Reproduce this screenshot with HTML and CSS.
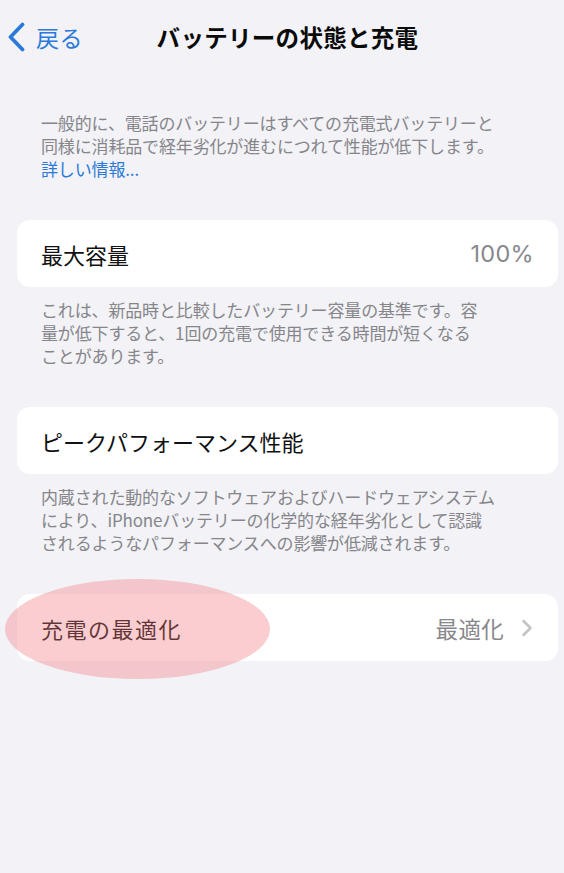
FILE: index.html
```html
<!DOCTYPE html>
<html lang="ja">
<head>
<meta charset="utf-8">
<title>バッテリーの状態と充電</title>
<link rel="stylesheet" href="styles.css">
</head>
<body>
<div class="screen">
  <header class="nav">
    <a class="back" href="#">
      <svg class="back-chev" width="18" height="30" viewBox="0 0 18 30" aria-hidden="true">
        <path d="M15.5 2.5 L3.5 15 L15.5 27.5" fill="none" stroke="currentColor" stroke-width="3.8" stroke-linecap="round" stroke-linejoin="round"/>
      </svg>
      <span class="back-label">戻る</span>
    </a>
    <h1 class="title">バッテリーの状態と充電</h1>
    <div class="nav-spacer"></div>
  </header>

  <main class="content">
    <p class="note note-intro">一般的に、電話のバッテリーはすべての充電式バッテリーと<br>同様に消耗品で経年劣化が進むにつれて性能が低下します。<br><a class="link" href="#">詳しい情報...</a></p>

    <section class="group">
      <div class="card">
        <span class="label">最大容量</span>
        <span class="value">100%</span>
      </div>
      <p class="note">これは、新品時と比較したバッテリー容量の基準です。容<br>量が低下すると、1回の充電で使用できる時間が短くなる<br>ことがあります。</p>
    </section>

    <section class="group">
      <div class="card">
        <span class="label">ピークパフォーマンス性能</span>
      </div>
      <p class="note">内蔵された動的なソフトウェアおよびハードウェアシステム<br>により、iPhoneバッテリーの化学的な経年劣化として認識<br>されるようなパフォーマンスへの影響が低減されます。</p>
    </section>

    <section class="group">
      <div class="card card-link">
        <span class="label label-wide">充電の最適化</span>
        <span class="value value-jp">最適化</span>
        <svg class="chev" width="12" height="18" viewBox="0 0 12 18" aria-hidden="true">
          <path d="M2.5 2 L9.5 9 L2.5 16" fill="none" stroke="currentColor" stroke-width="2.6" stroke-linecap="round" stroke-linejoin="round"/>
        </svg>
        <span class="highlight"></span>
      </div>
    </section>
  </main>
</div>
</body>
</html>
```

FILE: styles.css
```css
* {
  box-sizing: border-box;
}

html, body {
  margin: 0;
  padding: 0;
  background: #f2f2f7;
}

body {
  font-family: "Noto Sans CJK JP", "Noto Sans", sans-serif;
  color: #111111;
  width: 564px;
  min-height: 873px;
  overflow: hidden;
}

.screen {
  min-height: 873px;
}

.nav {
  display: grid;
  grid-template-columns: 1fr auto 1fr;
  align-items: center;
  height: 44px;
  margin-top: 15px;
  padding-left: 7px;
}

.back {
  display: flex;
  align-items: center;
  gap: 11px;
  color: #2b7ad8;
  text-decoration: none;
}

.back-chev {
  display: block;
}

.back-label {
  font-size: 23px;
  line-height: 30px;
  letter-spacing: 0.5px;
}

.title {
  margin: 0;
  padding-left: 4px;
  font-size: 23.5px;
  font-weight: 700;
  line-height: 30px;
  letter-spacing: 0.3px;
  white-space: nowrap;
  color: #0a0a0a;
}

.content {
  padding: 0 6px 0 17px;
}

.note {
  margin: 0;
  padding: 0 0 0 24px;
  font-size: 17px;
  line-height: 23px;
  letter-spacing: -0.15px;
  color: #86868a;
  white-space: nowrap;
}

.note-intro {
  margin-top: 52px;
}

.link {
  color: #2b7ad8;
  text-decoration: none;
}

.group {
  margin-top: 40px;
  display: flex;
  flex-direction: column;
  gap: 11px;
}

.card {
  position: relative;
  display: flex;
  align-items: center;
  height: 67px;
  padding: 0 24px;
  background: #ffffff;
  border-radius: 13px;
}

.label {
  flex: 1;
  font-size: 22px;
  line-height: 30px;
  color: #111111;
  white-space: nowrap;
}

.label-wide {
  letter-spacing: 1.5px;
}

.value {
  font-family: "Inter", "Noto Sans CJK JP", sans-serif;
  font-size: 23.5px;
  line-height: 30px;
  color: #88888c;
  letter-spacing: 0.3px;
}

.value-jp {
  font-family: "Noto Sans CJK JP", sans-serif;
  font-size: 22.5px;
  letter-spacing: 0.3px;
}

.card-link {
  padding-right: 25px;
}

.chev {
  display: block;
  margin-left: 17px;
  color: #c4c4c7;
}

.highlight {
  position: absolute;
  left: -12px;
  top: -15px;
  width: 265px;
  height: 100px;
  border-radius: 50%;
  background: rgba(240, 120, 125, 0.36);
  pointer-events: none;
}
```
